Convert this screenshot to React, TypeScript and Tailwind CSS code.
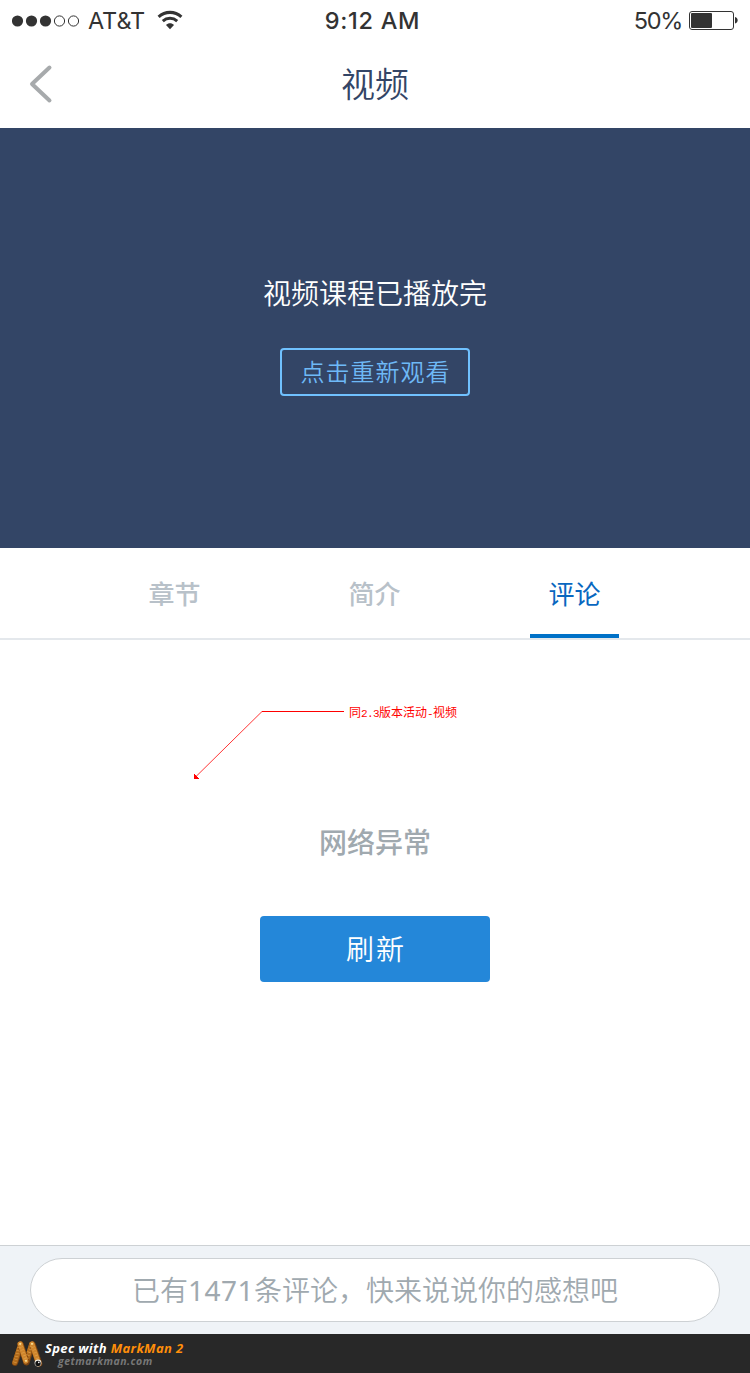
import React from "react";

function StatusBar() {
  return (
    <div className="flex h-10 items-center justify-between pl-3 pr-[11px] font-['Inter',sans-serif] text-[#333333]">
      <div className="flex w-[280px] items-center">
        <svg width="68" height="12" viewBox="0 0 68 12" className="mt-px">
          <circle cx="5.5" cy="6" r="5.6" fill="#333" />
          <circle cx="19.5" cy="6" r="5.6" fill="#333" />
          <circle cx="33.5" cy="6" r="5.6" fill="#333" />
          <circle cx="47.5" cy="6" r="5.1" fill="none" stroke="#333" />
          <circle cx="61.5" cy="6" r="5.1" fill="none" stroke="#333" />
        </svg>
        <span className="ml-2 w-[58px] whitespace-nowrap pt-0.5 text-[23.5px] leading-[38px] tracking-[-0.1px]">AT&amp;T</span>
        <svg width="26" height="20" viewBox="0 0 26 20" className="ml-[11px]" fill="none" stroke="#333">
          <path d="M1.6 6.8C8.2 .9 17.8 .9 24.4 6.8" strokeWidth="3.1" />
          <path d="M5.8 11.1C10 7.4 16 7.4 20.2 11.1" strokeWidth="3" />
          <path d="M9 15C11.2 12.7 14.8 12.7 17 15L13 19.2Z" fill="#333" stroke="none" />
        </svg>
      </div>
      <span className="mr-[6px] whitespace-nowrap pt-0.5 text-[23.5px] font-medium leading-[38px] tracking-[0.7px]">9:12 AM</span>
      <div className="flex w-[280px] items-center justify-end">
        <span className="whitespace-nowrap pt-0.5 text-[23.5px] leading-[38px] tracking-[-1.3px]">50%</span>
        <svg width="50" height="20" viewBox="0 0 50 20" className="ml-[7px]">
          <rect x=".5" y="1.5" width="44" height="18" rx="2.5" fill="none" stroke="#333" />
          <rect x="2" y="3" width="21" height="15" rx="1" fill="#333" />
          <path d="M46 7C49.6 7.5 49.6 13 46 13.5Z" fill="#333" />
        </svg>
      </div>
    </div>
  );
}

function Header() {
  return (
    <header className="grid h-[88px] grid-cols-[1fr_auto_1fr] items-center">
      <svg width="24" height="40" viewBox="0 0 24 40" className="ml-[29px]">
        <path d="M20.5 3.5L3 20L20.5 36.5" fill="none" stroke="#a7aaac" strokeWidth="4" strokeLinecap="round" strokeLinejoin="round" />
      </svg>
      <h1 className="pb-0.5 text-[34px] font-[350] leading-[86px] text-[#334566]">视频</h1>
    </header>
  );
}

function Player() {
  return (
    <section className="flex h-[420px] flex-col items-center bg-[#334566] pt-[143px]">
      <p className="text-[28px] font-[350] leading-[42px] text-white">视频课程已播放完</p>
      <button className="mt-[35px] h-12 w-[190px] rounded border-2 border-[#70c1ff] pb-0.5 pl-px text-2xl font-[350] leading-[42px] tracking-[1px] text-[#6eb9f7]">
        点击重新观看
      </button>
    </section>
  );
}

function Tabs() {
  return (
    <nav className="flex h-[92px] justify-center gap-[111px] border-b-2 border-[#e4e8ec] pr-[1px] text-[26px] font-medium leading-[90px]">
      <span className="w-[89px] text-center text-[#b8c1c9]">章节</span>
      <span className="w-[89px] text-center text-[#b8c1c9]">简介</span>
      <span className="h-[90px] w-[89px] border-b-4 border-[#0071c7] text-center font-normal text-[#0867c0]">评论</span>
    </nav>
  );
}

function Annotation() {
  return (
    <div className="absolute left-[190px] top-[64px] flex">
      <svg width="159" height="80" viewBox="0 0 159 80" shapeRendering="crispEdges">
        <path d="M5 73.5L72 7.5" stroke="#f00" fill="none" strokeWidth=".8" shapeRendering="auto" />
        <path d="M72 7H154V8H72Z" fill="#f00" />
        <path d="M4 70V75H9Z" fill="#f00" />
      </svg>
      <span className="whitespace-nowrap text-xs leading-4 text-[#f00]">
        同<span className="font-['Liberation_Mono',monospace] text-[11px] tracking-[-0.6px]">2.3</span>版本活动<span className="font-['Liberation_Mono',monospace] text-[11px] tracking-[-0.6px]">-</span>视频
      </span>
    </div>
  );
}

function MarkManLogo() {
  return (
    <svg width="34" height="30" viewBox="0 0 34 30" fill="none" strokeLinecap="round" strokeLinejoin="round">
      <g stroke="#7b4310" strokeWidth="6">
        <path d="M5 24L11 6.500" />
        <path d="M16.500 23.500L22 6.500" />
      </g>
      <g stroke="#b26b1b" strokeWidth="5">
        <path d="M4.800 23.500L10.500 5.500" />
        <path d="M16 23L21.500 5.500" />
      </g>
      <g stroke="#7b4310" strokeWidth="6.500">
        <path d="M10.500 5.500L16.200 22.500" />
        <path d="M22.500 5.500L29 24.500" />
      </g>
      <g stroke="#cf852c" strokeWidth="5.200">
        <path d="M10.200 5L15.800 22" />
        <path d="M22 5L28.500 24" />
      </g>
      <g stroke="#e0a04a" strokeWidth="3.600" strokeDasharray=".6 2.400" strokeLinecap="butt">
        <path d="M4.800 23.500L10.200 5" />
        <path d="M10.200 5L15.800 22" />
        <path d="M15.800 22L22 5" />
        <path d="M22 5L28.500 22" />
      </g>
      <g fill="#f8dc93">
        <circle cx="10.200" cy="4.800" r="1.100" />
        <circle cx="22" cy="4.800" r="1.100" />
        <circle cx="16" cy="21.800" r="1.100" />
      </g>
      <circle cx="28" cy="24" r="3.400" fill="#f4f0e8" />
      <circle cx="28" cy="24.400" r="2.700" fill="#111" />
      <circle cx="28.800" cy="23.400" r=".8" fill="#fff" />
    </svg>
  );
}

export default function App() {
  return (
    <div className="flex h-[1373px] w-[750px] flex-col overflow-hidden bg-white font-['Noto_Sans_CJK_SC',sans-serif]">
      <StatusBar />
      <Header />
      <Player />
      <Tabs />
      <main className="relative flex flex-1 flex-col items-center pt-[180px]">
        <Annotation />
        <p className="text-[28px] font-medium leading-[42px] text-[#a0a9af]">网络异常</p>
        <button className="mt-[54px] h-[66px] w-[230px] rounded bg-[#2487d9] pb-0.5 pl-0.5 text-[28px] font-[350] leading-[64px] tracking-[2px] text-white">刷新</button>
      </main>
      <div className="h-[89px] border-t border-[#cdd1d4] bg-[#eff3f7] px-[30px] pt-3">
        <div className="h-16 rounded-full border border-[#cdd1d4] bg-white text-center text-[28px] font-[350] leading-[60px] text-[#a0a9af]">
          已有<span className="font-['Noto_Sans',sans-serif] font-normal tracking-[0.5px]">1471</span>条评论，快来说说你的感想吧
        </div>
      </div>
      <footer className="flex h-[39px] items-center bg-[#282828] pl-[10px] font-['Open_Sans',sans-serif] font-bold italic">
        <MarkManLogo />
        <div className="flex flex-col whitespace-nowrap pl-px pt-0.5">
          <p className="text-[13px] leading-[13px] tracking-[0.35px] text-white">
            Spec with <span className="text-[#ff8e0a]">MarkMan 2</span>
          </p>
          <p className="pl-[13px] text-[10.5px] leading-[13px] tracking-[0.5px] text-[#777777]">getmarkman.com</p>
        </div>
      </footer>
    </div>
  );
}
